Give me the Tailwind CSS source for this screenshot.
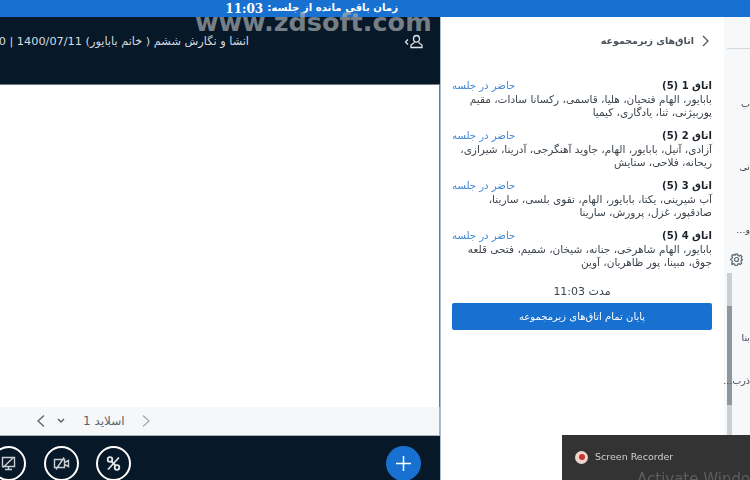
<!DOCTYPE html>
<html lang="fa">
<head>
    <meta charset="UTF-8">
    <title>Breakout rooms</title>
    <script src="https://cdn.jsdelivr.net/npm/@tailwindcss/browser@4"></script>
</head>
<body class="relative w-[750px] h-[480px] overflow-hidden bg-white blur-[0.35px] font-['DejaVu_Sans',sans-serif] text-[#2b323a]">
    <!-- Time bar -->
    <div dir="rtl" class="h-[17px] bg-[#1870d0] flex items-center pr-[352px] text-white text-[10.2px] font-bold leading-none whitespace-nowrap">زمان باقی مانده از جلسه: <span class="font-['DejaVu_Serif',serif] text-[12px] mr-[4px]">11:03</span></div>

    <div class="flex h-[463px]">
        <!-- Presentation column -->
        <div class="w-[441px] shrink-0 flex flex-col border-r border-[#aebdc6] overflow-hidden">
            <div class="h-[67px] shrink-0 bg-[#071828] flex justify-end pt-[16px] pr-[16px] gap-[155px] overflow-hidden">
                <div dir="rtl" class="whitespace-nowrap text-[11.3px] leading-[18px] text-[#d5dbe0]">انشا و نگارش ششم ( خانم بابایور) 1400/07/11 | 0</div>
                <svg class="w-[20px] h-[18px] shrink-0 text-[#dfe4e8]" viewBox="0 0 20 18" fill="none" stroke="currentColor" stroke-width="1.300">
                    <path d="M4 6.500 1.500 9 4 11.500"/>
                    <path d="M12.500 2.500c1.900 0 3 1.300 3 3.200 0 1.800-1.100 3.400-3 3.400s-3-1.600-3-3.400c0-1.900 1.100-3.200 3-3.200z"/>
                    <path d="M10.500 9.500 7 12v2.500h11V12l-3.500-2.500"/>
                </svg>
            </div>
            <div class="flex-1 bg-white border-t border-r border-[#6f7a83]"></div>
            <div class="h-[29px] shrink-0 bg-[#f5f7f9] border-b border-r border-[#a9b1b8] flex items-center pl-[36px] text-[#59636c]">
                <svg class="w-[10px] h-[14px]" viewBox="0 0 10 14" fill="none" stroke="currentColor" stroke-width="1.300"><path d="M8 1.500 2 7l6 5.500"/></svg>
                <svg class="w-[8px] h-[6px] ml-[11px]" viewBox="0 0 8 6" fill="none" stroke="currentColor" stroke-width="1.500"><path d="m1 1 3 3 3-3"/></svg>
                <span dir="rtl" class="ml-[18px] text-[12px] leading-none">اسلاید 1</span>
                <svg class="w-[10px] h-[14px] ml-[16px] text-[#a3abb2]" viewBox="0 0 10 14" fill="none" stroke="currentColor" stroke-width="1.300"><path d="m2 1.500 6 5.500-6 5.500"/></svg>
            </div>
            <div class="h-[44px] shrink-0 bg-[#071828] flex items-start pt-[10px] pr-[19px]">
                <div class="flex gap-[17.500px] ml-[-9px]">
                    <div class="w-[35px] h-[35px] shrink-0 rounded-full border-2 border-white flex items-center justify-center">
                        <svg class="w-[17px] h-[17px] text-[#c9ced3]" viewBox="0 0 17 17" fill="none" stroke="currentColor" stroke-width="1.400"><path d="M2.500 2.500h12v9h-12zM5 14.500h7M8.500 11.500v3M14 2 3 12.500"/></svg>
                    </div>
                    <div class="w-[35px] h-[35px] shrink-0 rounded-full border-2 border-white flex items-center justify-center">
                        <svg class="w-[17px] h-[17px] text-[#c9ced3]" viewBox="0 0 17 17" fill="none" stroke="currentColor" stroke-width="1.400"><path d="M1.500 4.500h10v8h-10zM11.500 7.500l4-2v6l-4-2M11 2.500 3 14.500"/></svg>
                    </div>
                    <div class="w-[35px] h-[35px] shrink-0 rounded-full border-2 border-white flex items-center justify-center">
                        <svg class="w-[17px] h-[17px] text-[#e2e6e9]" viewBox="0 0 17 17" fill="none" stroke="currentColor" stroke-width="1.800"><circle cx="5" cy="4.500" r="2.300"/><circle cx="12" cy="12.500" r="2.300"/><path d="M6.500 6.500l4 4M14 2.500l-11 12"/></svg>
                    </div>
                </div>
                <div class="ml-auto w-[35px] h-[35px] shrink-0 rounded-full bg-[#1870d0] flex items-center justify-center">
                    <svg class="w-[17px] h-[17px] text-white" viewBox="0 0 17 17" fill="none" stroke="currentColor" stroke-width="1.500"><path d="M8.500 1v15M1 8.500h15"/></svg>
                </div>
            </div>
        </div>

        <!-- Breakout rooms panel -->
        <div dir="rtl" class="w-[283px] shrink-0 bg-white pr-[12px] pl-[11px]">
            <div class="flex items-center gap-[7px] h-[48px] pr-[3px] text-[9.500px] font-bold text-[#4a525a]">
                <svg class="w-[8px] h-[12px]" viewBox="0 0 8 12" fill="none" stroke="currentColor" stroke-width="1.200"><path d="m2 1 5 5-5 5"/></svg>
                <span>اتاق‌های زیرمجموعه</span>
            </div>
            <div class="pt-[14px] flex flex-col gap-[10px]">
                <div>
                    <div class="flex justify-between text-[10px] leading-[14px]"><span class="font-bold text-[#1c2229]">اتاق 1 (5)</span><span class="text-[#3f86d6] text-[10.100px]">حاضر در جلسه</span></div>
                    <p class="text-[10.500px] leading-[13px] text-[#3c444c]">بابایور، الهام فتحیان، هلیا، قاسمی، رکسانا سادات، مقیم پوربیژنی، ثنا، یادگاری، کیمیا</p>
                </div>
                <div>
                    <div class="flex justify-between text-[10px] leading-[14px]"><span class="font-bold text-[#1c2229]">اتاق 2 (5)</span><span class="text-[#3f86d6] text-[10.100px]">حاضر در جلسه</span></div>
                    <p class="text-[10.500px] leading-[13px] text-[#3c444c]">آزادی، آنیل، بابایور، الهام، جاوید آهنگرجی، آدرینا، شیرازی، ریحانه، فلاحی، ستایش</p>
                </div>
                <div>
                    <div class="flex justify-between text-[10px] leading-[14px]"><span class="font-bold text-[#1c2229]">اتاق 3 (5)</span><span class="text-[#3f86d6] text-[10.100px]">حاضر در جلسه</span></div>
                    <p class="text-[10.500px] leading-[13px] text-[#3c444c]">آب شیرینی، یکتا، بابایور، الهام، تقوی بلسی، سارینا، صادقپور، غزل، پرورش، سارینا</p>
                </div>
                <div>
                    <div class="flex justify-between text-[10px] leading-[14px]"><span class="font-bold text-[#1c2229]">اتاق 4 (5)</span><span class="text-[#3f86d6] text-[10.100px]">حاضر در جلسه</span></div>
                    <p class="text-[10.500px] leading-[13px] text-[#3c444c]">بابایور، الهام شاهرخی، جنانه، شیخان، شمیم، فتحی قلعه جوق، مبینا، پور ظاهریان، آوین</p>
                </div>
            </div>
            <div class="mt-[16px] text-center text-[11px] leading-[14px] text-[#3c444c]">مدت 11:03</div>
            <div class="mt-[4px] h-[27px] rounded-[2px] bg-[#1870d0] text-white text-[10px] flex items-center justify-center">پایان تمام اتاق‌های زیرمجموعه</div>
        </div>

        <!-- Collapsed user list, cut off at the window edge -->
        <div dir="rtl" class="flex-1 bg-[#f6f8fa] overflow-hidden relative text-[9.500px] text-[#3c444c] whitespace-nowrap">
            <div class="h-[32px] border-b border-[#d5dae0] w-[23px]"></div>
            <div class="pt-[48px] leading-[14px]">ب</div>
            <div class="pt-[49px] leading-[14px]">نی</div>
            <div class="pt-[49px] leading-[14px]">و...</div>
            <svg class="absolute left-[6px] top-[236px] w-[13px] h-[13px] text-[#5b646c]" viewBox="0 0 13 13" fill="none" stroke="currentColor" stroke-width="1.200"><circle cx="6.500" cy="6.500" r="2"/><path d="M5.500 1h2l.4 1.500 1.400.6 1.300-.8 1.400 1.400-.8 1.300.6 1.400L13 6.500l-1.500.9-.6 1.400.8 1.300-1.400 1.400-1.300-.8-1.400.6-.4 1.500h-2l-.4-1.500-1.400-.6-1.300.8L1.700 10l.8-1.300-.6-1.400L.5 6.500 1.900 5.600l.6-1.400-.8-1.300L3.100 1.500l1.300.8 1.400-.6z"/></svg>
            <div class="absolute left-[3px] top-[256px] w-[5px] h-[162px] bg-[#c9cfd4] pt-[33px]"><div class="h-[99px] bg-[#8f979e]"></div></div>
            <div class="absolute right-0 top-[314px] leading-[14px]">بنا</div>
            <div class="absolute right-0 top-[357px] leading-[14px]">ذرب...</div>
        </div>
    </div>

    <!-- Recorder toast -->
    <div class="absolute right-0 bottom-0 w-[188px] h-[45px] bg-[#333333] overflow-hidden pl-[13px] pt-[15px]">
        <div class="flex items-center gap-[7px] text-[9.500px] leading-[14px] text-[#cfcfcf]">
            <span class="w-[13px] h-[13px] rounded-full bg-[#f0d5cf] flex items-center justify-center"><span class="w-[6px] h-[6px] rounded-full bg-[#c8332b]"></span></span>
            <span>Screen Recorder</span>
        </div>
        <div class="pl-[62px] mt-[6px] text-[15px] leading-[18px] whitespace-nowrap text-[#5d5d5d]">Activate Windows</div>
    </div>

    <!-- Site watermark -->
    <div class="absolute left-[195px] top-[7px] text-[25.500px] leading-[30px] font-bold text-[#a9adb2]/70">www.zdsoft.com</div>
</body>
</html>
